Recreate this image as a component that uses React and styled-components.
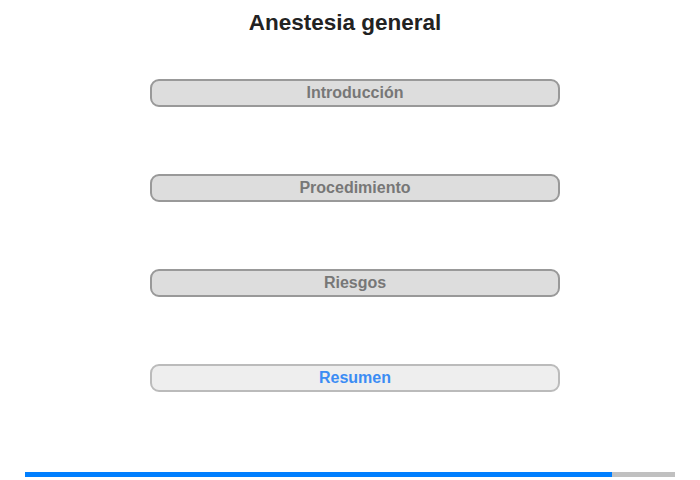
import React from 'react';
import styled, { createGlobalStyle } from 'styled-components';

const GlobalStyle = createGlobalStyle`
  body {
    margin: 0;
    background: #fff;
    font-family: "Liberation Sans", Arial, sans-serif;
  }
`;

const sections = [
  { label: 'Introducción' },
  { label: 'Procedimiento' },
  { label: 'Riesgos' },
  { label: 'Resumen', current: true },
];

function App() {
  const progress = 90.3;

  return (
    <Page>
      <GlobalStyle />
      <Title>Anestesia general</Title>
      <Menu>
        {sections.map((s) => (
          <MenuButton key={s.label} $current={s.current}>
            {s.label}
          </MenuButton>
        ))}
      </Menu>
      <Progress>
        <Fill style={{ width: `${progress}%` }} />
      </Progress>
    </Page>
  );
}

const Page = styled.div`
    width: 700px;
    height: 480px;
    display: flex;
    flex-direction: column;
    align-items: center;
    box-sizing: border-box;
    padding-top: 9px;
    padding-left: 10px;
`;

const Title = styled.h1`
    margin: 0 20px 0 0;
    font-size: 22.5px;
    font-weight: 700;
    color: #222;
    line-height: 27px;
`;

const Menu = styled.div`
    display: flex;
    flex-direction: column;
    gap: 67px;
    margin-top: 43px;
`;

const MenuButton = styled.div`
    width: 410px;
    height: 28px;
    box-sizing: border-box;
    border: 2px solid ${(p) => (p.$current ? '#bbb' : '#999')};
    border-radius: 9px;
    background: ${(p) => (p.$current ? '#eee' : '#ddd')};
    color: ${(p) => (p.$current ? '#3b8cf4' : '#777')};
    font-size: 16px;
    font-weight: 700;
    display: flex;
    align-items: center;
    justify-content: center;
    cursor: pointer;
`;

const Progress = styled.div`
    margin-top: auto;
    margin-bottom: 3px;
    margin-left: -10px;
    width: 650px;
    height: 5px;
    background: #c0c0c0;
    display: flex;
`;

const Fill = styled.div`
    height: 100%;
    background: #007fff;
`;

export default App;
